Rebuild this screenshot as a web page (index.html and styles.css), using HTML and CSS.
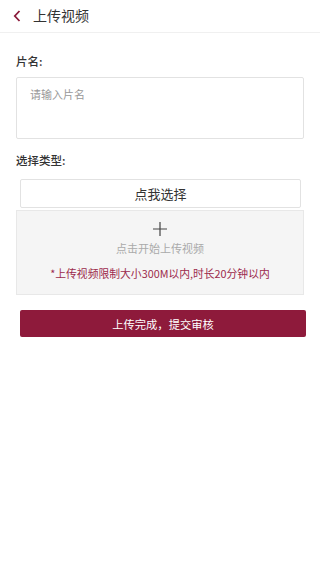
FILE: index.html
```html
<!DOCTYPE html>
<html lang="zh">
<head>
<meta charset="utf-8">
<meta name="viewport" content="width=device-width, initial-scale=1">
<link rel="stylesheet" href="styles.css">
</head>
<body>
<header class="topbar">
  <svg class="back" width="8" height="12" viewBox="0 0 8 12"><path d="M6.5 1 L1.8 6 L6.5 11" fill="none" stroke="#8b1a3a" stroke-width="1.8"/></svg>
  <span class="title">上传视频</span>
</header>
<main class="content">
  <div class="label">片名:</div>
  <div class="input"><span class="placeholder">请输入片名</span></div>
  <div class="label label-type">选择类型:</div>
  <div class="select">点我选择</div>
  <div class="upload">
    <svg class="plus" width="14" height="14" viewBox="0 0 14 14"><path d="M7 0 V14 M0 7 H14" stroke="#444" stroke-width="1.2"/></svg>
    <div class="upload-hint">点击开始上传视频</div>
    <div class="upload-note">*上传视频限制大小300M以内,时长20分钟以内</div>
  </div>
  <div class="submit">上传完成，提交审核</div>
</main>
</body>
</html>
```
FILE: styles.css
```css
html, body {
  margin: 0;
  padding: 0;
  background: #fff;
  font-family: "Noto Sans CJK SC", "Noto Sans", sans-serif;
  color: #333;
}
.topbar {
  height: 32px;
  display: flex;
  align-items: center;
  border-bottom: 1px solid #f0f0f0;
  padding-left: 13px;
}
.back {
  display: block;
  margin-right: 12px;
}
.title {
  font-size: 14px;
  color: #333;
  line-height: 1;
  margin-top: -2px;
}
.content {
  padding: 0 16px;
  display: flex;
  flex-direction: column;
}
.label {
  font-size: 11.5px;
  font-weight: 500;
  color: #333;
  margin-top: 20px;
  line-height: 16px;
}
.input {
  margin-top: 8px;
  border: 1px solid #e2e2e2;
  border-radius: 2px;
  padding: 8px 13px;
  box-sizing: border-box;
  height: 62px;
}
.placeholder {
  font-size: 11px;
  color: #999;
  line-height: 16px;
  display: block;
}
.label-type {
  margin-top: 13px;
}
.select {
  margin: 11px 3px 0 4px;
  height: 29px;
  border: 1px solid #e2e2e2;
  border-radius: 2px;
  box-sizing: border-box;
  display: flex;
  align-items: center;
  justify-content: center;
  font-size: 13px;
  color: #333;
}
.upload {
  margin-top: 2px;
  height: 85px;
  box-sizing: border-box;
  background: #f5f5f5;
  border: 1px solid #e8e8e8;
  display: flex;
  flex-direction: column;
  align-items: center;
  padding-top: 11px;
}
.plus { display: block; }
.upload-hint {
  margin-top: 4px;
  font-size: 11px;
  color: #aaa;
  line-height: 16px;
}
.upload-note {
  margin-top: 10px;
  font-size: 10.8px;
  color: #9c2a4c;
  line-height: 14px;
}
.submit {
  margin: 15px -2px 0 4px;
  height: 27px;
  background: #8e1a3b;
  border-radius: 2px;
  color: #fff;
  font-size: 11.3px;
  display: flex;
  align-items: center;
  justify-content: center;
}
```
